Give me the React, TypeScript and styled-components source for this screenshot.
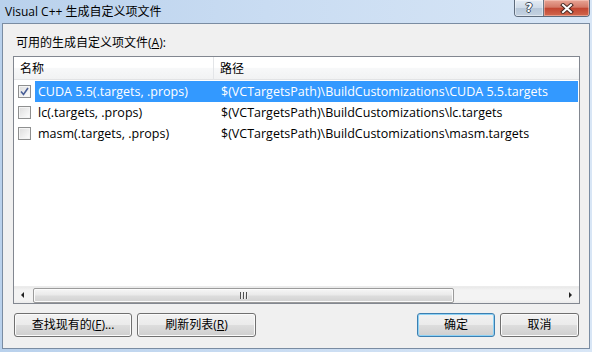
import React from "react";
import styled, { createGlobalStyle, css } from "styled-components";

const GlobalStyle = createGlobalStyle`
  html, body {
    margin: 0;
    padding: 0;
  }
  body {
    width: 592px;
    height: 352px;
    overflow: hidden;
    font-family: "Open Sans", "Noto Sans CJK SC", sans-serif;
    font-size: 12px;
    color: #000;
  }
`;

const Frame = styled.div`
  width: 592px;
  height: 352px;
  box-sizing: border-box;
  display: flex;
  flex-direction: column;
  padding: 0 2px 3px 2px;
  background: linear-gradient(to right, #b9d1ec 0%, #c9dcf2 45%, #d8e6f6 100%);
`;

const TitleBar = styled.div`
  height: 23px;
  display: flex;
  align-items: flex-start;
`;

const Title = styled.div`
  padding: 5px 0 0 3px;
  line-height: 14px;
  font-size: 12px;
  white-space: nowrap;
`;

const Captions = styled.div`
  margin-left: auto;
  display: flex;
  height: 16px;
  border: 1px solid #5d6b7c;
  border-top: none;
  border-radius: 0 0 4px 4px;
  overflow: hidden;
`;

const CaptionButton = styled.div<{ $kind: "help" | "close" }>`
  display: flex;
  align-items: center;
  justify-content: center;
  ${(p) =>
    p.$kind === "help"
      ? css`
          width: 28px;
          border-right: 1px solid #6d7886;
          background: linear-gradient(#e3ebf4 0%, #cfdbe8 50%, #b7c7d9 51%, #c4d2e1 100%);
          box-shadow: inset 0 0 0 1px rgba(255, 255, 255, 0.45);
        `
      : css`
          width: 45px;
          background: linear-gradient(#e8a596 0%, #d47967 45%, #c24631 52%, #d2684e 100%);
          box-shadow: inset 0 0 0 1px rgba(255, 220, 210, 0.45);
        `}
`;

const HelpGlyph = styled.span`
  font-family: "DejaVu Sans", sans-serif;
  font-weight: bold;
  font-size: 12px;
  line-height: 12px;
  color: #fff;
  text-shadow: 1px 0 0 #3d4a5a, -1px 0 0 #3d4a5a, 0 1px 0 #3d4a5a, 0 -1px 0 #3d4a5a;
`;

const Client = styled.div`
  flex: 1;
  display: flex;
  flex-direction: column;
  border: 1px solid #7a8ca2;
  background: #f0f0f0;
  padding: 10px 9px 11px 10px;
`;

const Label = styled.div`
  line-height: 18px;
  height: 18px;
  padding-left: 3px;
  margin-bottom: 4px;
`;

const ListBox = styled.div`
  height: 248px;
  box-sizing: border-box;
  border: 1px solid #828790;
  background: #fff;
  display: flex;
  flex-direction: column;
`;

const Header = styled.div`
  height: 23px;
  display: flex;
  border-bottom: 1px solid #ffffff;
  background: linear-gradient(#ffffff 0%, #ffffff 45%, #f7f8f9 50%, #f1f2f3 100%);
  box-shadow: inset 0 -1px 0 #e2e3e5;
`;

const HeaderCell = styled.div<{ $width?: number }>`
  box-sizing: border-box;
  ${(p) => (p.$width ? `width: ${p.$width}px; border-right: 1px solid #e3e5e8;` : "flex: 1;")}
  padding-left: 6px;
  line-height: 23px;
`;

const Row = styled.div`
  height: 21px;
  display: flex;
  align-items: center;
`;

const CheckBox = styled.div`
  width: 13px;
  height: 13px;
  box-sizing: border-box;
  margin-left: 4px;
  border: 1px solid #8e8f8f;
  background: linear-gradient(135deg, #dcdcdc 0%, #f4f4f4 70%, #ffffff 100%);
  box-shadow: inset 0 0 0 1px #f4f4f4;
  display: flex;
  align-items: center;
  justify-content: center;
`;

const Item = styled.div<{ $selected?: boolean }>`
  flex: 1;
  display: flex;
  height: 21px;
  margin: 0 1px 0 4px;
  font-size: 12.5px;
  line-height: 21px;
  white-space: nowrap;
  ${(p) =>
    p.$selected &&
    css`
      background: #3399ff;
      color: #fff;
    `}
`;

const NameText = styled.div`
  width: 179px;
  box-sizing: border-box;
  padding-left: 3px;
`;

const PathText = styled.div`
  padding-left: 7px;
`;

const Spacer = styled.div`
  flex: 1;
`;

const ScrollBar = styled.div`
  height: 17px;
  display: flex;
  align-items: center;
  background: linear-gradient(#e9e9e9 0%, #f3f3f3 20%, #f3f3f3 80%, #ebebeb 100%);
  border-top: 1px solid #ececec;
  box-sizing: border-box;
`;

const ArrowButton = styled.div<{ $dir: "left" | "right" }>`
  width: 17px;
  height: 16px;
  display: flex;
  align-items: center;
  justify-content: center;
  &::before {
    content: "";
    width: 0;
    height: 0;
    border-top: 3px solid transparent;
    border-bottom: 3px solid transparent;
    ${(p) =>
      p.$dir === "left" ? "border-right: 3px solid #222;" : "border-left: 3px solid #222;"}
  }
`;

const Thumb = styled.div`
  width: 421px;
  height: 15px;
  margin-left: 2px;
  box-sizing: border-box;
  border: 1px solid #9b9b9b;
  border-radius: 2px;
  background: linear-gradient(#f6f6f6 0%, #eaeaea 45%, #dcdcdc 55%, #d2d2d2 100%);
  box-shadow: inset 0 0 0 1px #fbfbfb;
  display: flex;
  align-items: center;
  justify-content: center;
  gap: 2px;
`;

const GripLine = styled.div`
  width: 1px;
  height: 7px;
  background: #4f4f4f;
  box-shadow: 1px 0 0 #eeeeee;
`;

const ButtonRow = styled.div`
  display: flex;
  margin-top: 9px;
  padding: 0 1px;
  gap: 5px;
`;

const Button = styled.div<{ $width: number; $default?: boolean }>`
  width: ${(p) => p.$width}px;
  height: 24px;
  box-sizing: border-box;
  border: 1px solid ${(p) => (p.$default ? "#3c7fb1" : "#707070")};
  border-radius: 3px;
  background: linear-gradient(#f2f2f2 0%, #ebebeb 48%, #dddddd 52%, #cfcfcf 100%);
  box-shadow: inset 0 0 0 1px ${(p) => (p.$default ? "#8ed2f5" : "#fbfbfb")};
  display: flex;
  align-items: center;
  justify-content: center;
  line-height: 22px;
  white-space: nowrap;
`;

const Push = styled.div`
  margin-left: auto;
`;

const CloseIcon = () => (
  <svg width="14" height="11" viewBox="0 0 14 11">
    <path d="M3 2 L11 9 M11 2 L3 9" stroke="#4b2a24" strokeWidth="4" strokeLinecap="square" />
    <path d="M3 2 L11 9 M11 2 L3 9" stroke="#ffffff" strokeWidth="2" strokeLinecap="square" />
  </svg>
);

const CheckMark = () => (
  <svg width="9" height="9" viewBox="0 0 9 9">
    <path d="M1 4.5 L3.5 7.5 L8 1" fill="none" stroke="#4a5f97" strokeWidth="1.6" />
  </svg>
);

const items = [
  {
    name: "CUDA 5.5(.targets, .props)",
    path: "$(VCTargetsPath)\\BuildCustomizations\\CUDA 5.5.targets",
    checked: true,
    selected: true,
  },
  {
    name: "lc(.targets, .props)",
    path: "$(VCTargetsPath)\\BuildCustomizations\\lc.targets",
    checked: false,
    selected: false,
  },
  {
    name: "masm(.targets, .props)",
    path: "$(VCTargetsPath)\\BuildCustomizations\\masm.targets",
    checked: false,
    selected: false,
  },
];

const App: React.FC = () => {
  return (
    <>
      <GlobalStyle />
      <Frame>
        <TitleBar>
          <Title>Visual C++ 生成自定义项文件</Title>
          <Captions>
            <CaptionButton $kind="help">
              <HelpGlyph>?</HelpGlyph>
            </CaptionButton>
            <CaptionButton $kind="close">
              <CloseIcon />
            </CaptionButton>
          </Captions>
        </TitleBar>
        <Client>
          <Label>
            可用的生成自定义项文件(<u>A</u>):
          </Label>
          <ListBox>
            <Header>
              <HeaderCell $width={200}>名称</HeaderCell>
              <HeaderCell>路径</HeaderCell>
            </Header>
            {items.map((it) => (
              <Row key={it.name}>
                <CheckBox>{it.checked && <CheckMark />}</CheckBox>
                <Item $selected={it.selected}>
                  <NameText>{it.name}</NameText>
                  <PathText>{it.path}</PathText>
                </Item>
              </Row>
            ))}
            <Spacer />
            <ScrollBar>
              <ArrowButton $dir="left" />
              <Thumb>
                <GripLine />
                <GripLine />
                <GripLine />
              </Thumb>
              <Spacer />
              <ArrowButton $dir="right" />
            </ScrollBar>
          </ListBox>
          <ButtonRow>
            <Button $width={118}>
              查找现有的(<u>F</u>)...
            </Button>
            <Button $width={119}>
              刷新列表(<u>R</u>)
            </Button>
            <Push />
            <Button $width={78} $default>
              确定
            </Button>
            <Button $width={79}>取消</Button>
          </ButtonRow>
        </Client>
      </Frame>
    </>
  );
};

export default App;
